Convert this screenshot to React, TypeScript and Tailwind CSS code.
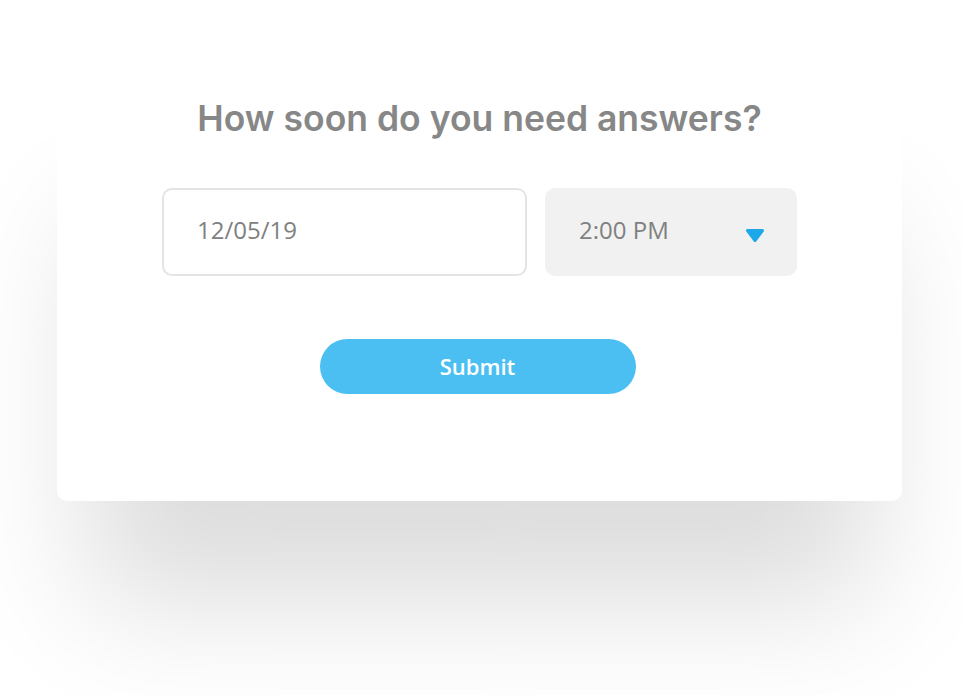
import React from 'react';

const Caret: React.FC = () => (
  <svg width="20" height="15" viewBox="0 0 20 15" className="shrink-0">
    <path d="M2.5 2.5 L17.5 2.5 L10 12.5 Z" fill="#1ea8ea" stroke="#1ea8ea" strokeWidth="3" strokeLinejoin="round" />
  </svg>
);

const App: React.FC = () => {
  return (
    <div className="w-full h-[695px] bg-white overflow-hidden">
      <div className="ml-[57px] mt-[60px] w-[845px] bg-white rounded-[10px] shadow-[0_130px_130px_-30px_rgba(0,0,0,0.14)] flex flex-col items-center pt-[37px] pb-[107px]">
        <h1 className="font-['Inter',sans-serif] font-semibold text-[35.5px] leading-[44px] text-[#878787]">
          How soon do you need answers?
        </h1>

        {/* date + time */}
        <div className="mt-[47px] flex gap-[18px] font-['Open_Sans',sans-serif]">
          <div className="w-[365px] h-[88px] rounded-[10px] border-2 border-[#e4e4e4] flex items-center pl-[33px] pb-[4px] text-[24px] text-[#808080]">
            12/05/19
          </div>
          <div className="w-[252px] h-[88px] rounded-[10px] bg-[#f1f1f1] flex items-center justify-between pl-[34px] pr-[32px] text-[24px] text-[#808080]">
            <span className="pb-[4px]">2:00 PM</span>
            <span className="mt-[6px]"><Caret /></span>
          </div>
        </div>

        <button className="mt-[63px] mr-[4px] w-[316px] h-[55px] rounded-full bg-[#4bbff1] text-white font-['Open_Sans',sans-serif] font-semibold text-[22px] flex items-center justify-center">
          Submit
        </button>
      </div>
    </div>
  );
};

export default App;
